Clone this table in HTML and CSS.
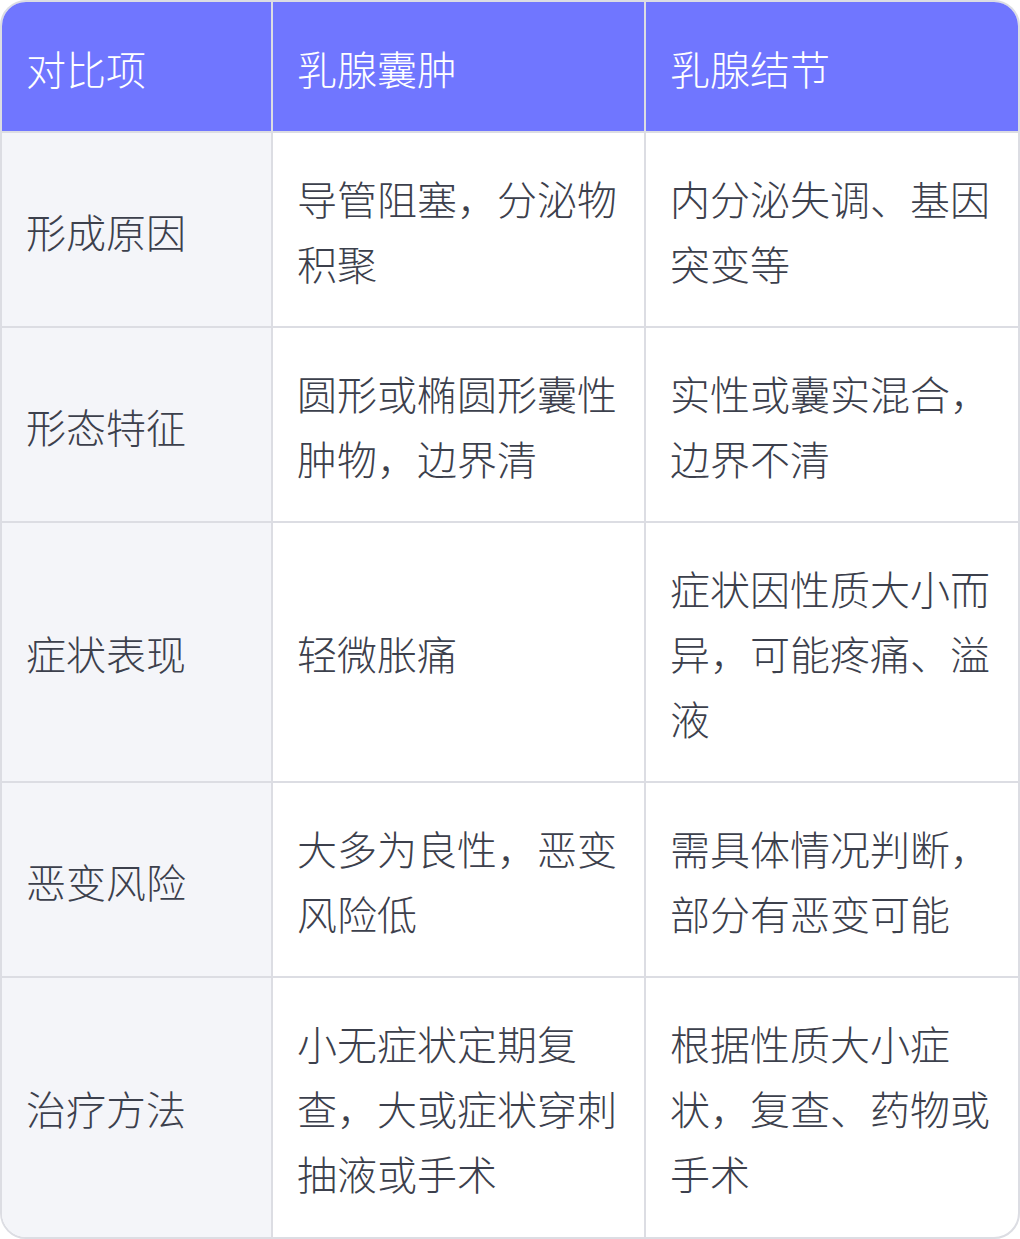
FILE: index.html
```html
<!DOCTYPE html>
<html lang="zh-CN">
<head>
<meta charset="utf-8">
<title>乳腺囊肿与乳腺结节对比</title>
<link rel="stylesheet" href="styles.css">
</head>
<body>
<div class="table-wrap">
  <table class="compare">
    <thead>
      <tr>
        <th class="c1">对比项</th>
        <th class="c2">乳腺囊肿</th>
        <th class="c3">乳腺结节</th>
      </tr>
    </thead>
    <tbody>
      <tr>
        <td class="label">形成原因</td>
        <td>导管阻塞，分泌物积聚</td>
        <td>内分泌失调、基因突变等</td>
      </tr>
      <tr>
        <td class="label">形态特征</td>
        <td>圆形或椭圆形囊性肿物，边界清</td>
        <td>实性或囊实混合，边界不清</td>
      </tr>
      <tr>
        <td class="label">症状表现</td>
        <td>轻微胀痛</td>
        <td>症状因性质大小而异，可能疼痛、溢液</td>
      </tr>
      <tr>
        <td class="label">恶变风险</td>
        <td>大多为良性，恶变风险低</td>
        <td>需具体情况判断，部分有恶变可能</td>
      </tr>
      <tr>
        <td class="label">治疗方法</td>
        <td>小无症状定期复查，大或症状穿刺抽液或手术</td>
        <td>根据性质大小症状，复查、药物或手术</td>
      </tr>
    </tbody>
  </table>
</div>
</body>
</html>
```
FILE: styles.css
```css
html, body {
  margin: 0;
  padding: 0;
  background: #ffffff;
}

body {
  font-family: "Noto Sans CJK SC", "Noto Sans", sans-serif;
}

.table-wrap {
  width: 1020px;
  box-sizing: border-box;
  border: 2px solid #dcdde3;
  border-radius: 26px;
  overflow: hidden;
}

.compare {
  width: 1016px;
  table-layout: fixed;
  border-collapse: separate;
  border-spacing: 0;
}

.compare th,
.compare td {
  box-sizing: border-box;
  padding: 33px 24px 30px;
  font-size: 40px;
  line-height: 65px;
  font-weight: 300;
  text-align: left;
  vertical-align: middle;
  border-right: 2px solid #dcdde3;
  border-bottom: 2px solid #dcdde3;
  color: #3c404c;
  word-break: break-all;
}

.compare th:last-child,
.compare td:last-child {
  border-right: none;
}

.compare tbody tr:last-child td {
  border-bottom: none;
  padding-bottom: 31px;
}

.compare th {
  background: #7076ff;
  color: #ffffff;
  padding-top: 34px;
}

.compare .c1 { width: 271px; }
.compare .c2 { width: 373px; }
.compare .c3 { width: 372px; }

.compare td.label {
  background: #f4f5f9;
}
```
